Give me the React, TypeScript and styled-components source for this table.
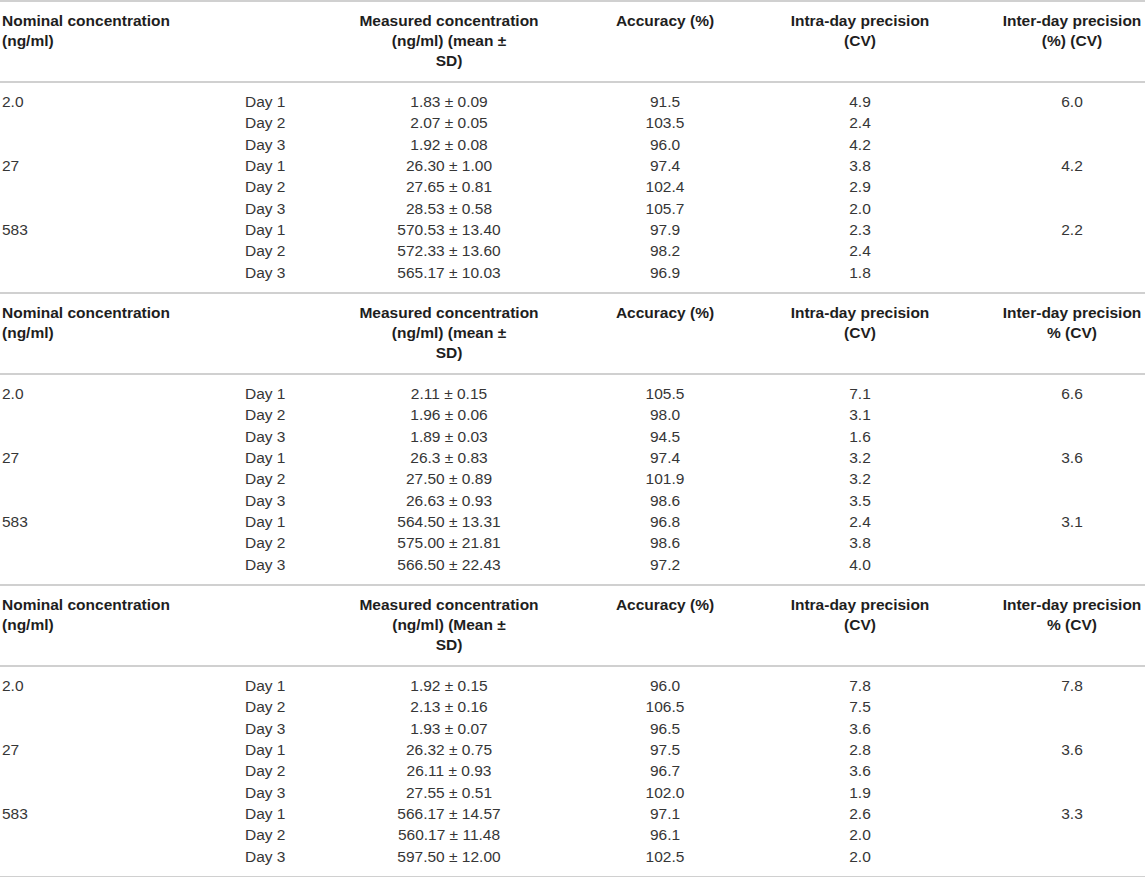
import React from "react";
import styled, { createGlobalStyle } from "styled-components";

const Global = createGlobalStyle`
  html, body { margin: 0; padding: 0; background: #ffffff; }
  body { font-family: "Liberation Sans", Arial, Helvetica, sans-serif; }
`;

const COLS = "245px 108px 192px 240px 214px 146px";

const Page = styled.div`
  width: 1145px;
  display: flex;
  flex-direction: column;
`;

const Table = styled.section<{ $last?: boolean }>`
  border-top: 2px solid #d0d0d0;
  border-bottom: ${(p) => (p.$last ? "2px solid #d0d0d0" : "none")};
`;

const HeadRow = styled.div`
  display: grid;
  grid-template-columns: ${COLS};
  padding: 9px 0 10px;
  border-bottom: 2px solid #d0d0d0;
  font-size: 15.5px;
  line-height: 20px;
  font-weight: 700;
  color: #1e1e1e;
`;

const Body = styled.div`
  display: flex;
  flex-direction: column;
  padding: 8px 0 9px;
`;

const BodyRow = styled.div`
  display: grid;
  grid-template-columns: ${COLS};
  font-size: 15.5px;
  line-height: 21.33px;
  color: #363636;
`;

const Cell = styled.div<{ $align: "left" | "center"; $padLeft?: number; $padRight?: number }>`
  text-align: ${(p) => p.$align};
  padding-left: ${(p) => p.$padLeft ?? 0}px;
  padding-right: ${(p) => p.$padRight ?? 0}px;
  white-space: nowrap;
`;

type ColSpec = { align: "left" | "center"; padLeft?: number; padRight?: number };
const colSpecs: ColSpec[] = [
  { align: "left", padLeft: 2 },
  { align: "left" },
  { align: "center" },
  { align: "center" },
  { align: "center", padRight: 64 },
  { align: "center" },
];

type TableData = {
  measured: string;
  inter: string;
  rows: string[][];
};

const tables: TableData[] = [
  {
    measured: "(ng/ml) (mean ±",
    inter: "(%) (CV)",
    rows: [
      ["2.0", "Day 1", "1.83 ± 0.09", "91.5", "4.9", "6.0"],
      ["", "Day 2", "2.07 ± 0.05", "103.5", "2.4", ""],
      ["", "Day 3", "1.92 ± 0.08", "96.0", "4.2", ""],
      ["27", "Day 1", "26.30 ± 1.00", "97.4", "3.8", "4.2"],
      ["", "Day 2", "27.65 ± 0.81", "102.4", "2.9", ""],
      ["", "Day 3", "28.53 ± 0.58", "105.7", "2.0", ""],
      ["583", "Day 1", "570.53 ± 13.40", "97.9", "2.3", "2.2"],
      ["", "Day 2", "572.33 ± 13.60", "98.2", "2.4", ""],
      ["", "Day 3", "565.17 ± 10.03", "96.9", "1.8", ""],
    ],
  },
  {
    measured: "(ng/ml) (mean ±",
    inter: "% (CV)",
    rows: [
      ["2.0", "Day 1", "2.11 ± 0.15", "105.5", "7.1", "6.6"],
      ["", "Day 2", "1.96 ± 0.06", "98.0", "3.1", ""],
      ["", "Day 3", "1.89 ± 0.03", "94.5", "1.6", ""],
      ["27", "Day 1", "26.3 ± 0.83", "97.4", "3.2", "3.6"],
      ["", "Day 2", "27.50 ± 0.89", "101.9", "3.2", ""],
      ["", "Day 3", "26.63 ± 0.93", "98.6", "3.5", ""],
      ["583", "Day 1", "564.50 ± 13.31", "96.8", "2.4", "3.1"],
      ["", "Day 2", "575.00 ± 21.81", "98.6", "3.8", ""],
      ["", "Day 3", "566.50 ± 22.43", "97.2", "4.0", ""],
    ],
  },
  {
    measured: "(ng/ml) (Mean ±",
    inter: "% (CV)",
    rows: [
      ["2.0", "Day 1", "1.92 ± 0.15", "96.0", "7.8", "7.8"],
      ["", "Day 2", "2.13 ± 0.16", "106.5", "7.5", ""],
      ["", "Day 3", "1.93 ± 0.07", "96.5", "3.6", ""],
      ["27", "Day 1", "26.32 ± 0.75", "97.5", "2.8", "3.6"],
      ["", "Day 2", "26.11 ± 0.93", "96.7", "3.6", ""],
      ["", "Day 3", "27.55 ± 0.51", "102.0", "1.9", ""],
      ["583", "Day 1", "566.17 ± 14.57", "97.1", "2.6", "3.3"],
      ["", "Day 2", "560.17 ± 11.48", "96.1", "2.0", ""],
      ["", "Day 3", "597.50 ± 12.00", "102.5", "2.0", ""],
    ],
  },
];

function PrecisionTable({ data, last }: { data: TableData; last?: boolean }) {
  const head: React.ReactNode[] = [
    <>Nominal concentration<br />(ng/ml)</>,
    null,
    <>Measured concentration<br />{data.measured}<br />SD)</>,
    <>Accuracy (%)</>,
    <>Intra-day precision<br />(CV)</>,
    <>Inter-day precision<br />{data.inter}</>,
  ];
  return (
    <Table $last={last}>
      <HeadRow>
        {head.map((h, i) => (
          <Cell key={i} $align={colSpecs[i].align} $padLeft={colSpecs[i].padLeft} $padRight={colSpecs[i].padRight}>
            {h}
          </Cell>
        ))}
      </HeadRow>
      <Body>
        {data.rows.map((r, ri) => (
          <BodyRow key={ri}>
            {r.map((c, ci) => (
              <Cell key={ci} $align={colSpecs[ci].align} $padLeft={colSpecs[ci].padLeft} $padRight={colSpecs[ci].padRight}>
                {c}
              </Cell>
            ))}
          </BodyRow>
        ))}
      </Body>
    </Table>
  );
}

export default function App() {
  return (
    <>
      <Global />
      <Page>
        {tables.map((t, i) => (
          <PrecisionTable key={i} data={t} last={i === tables.length - 1} />
        ))}
      </Page>
    </>
  );
}
